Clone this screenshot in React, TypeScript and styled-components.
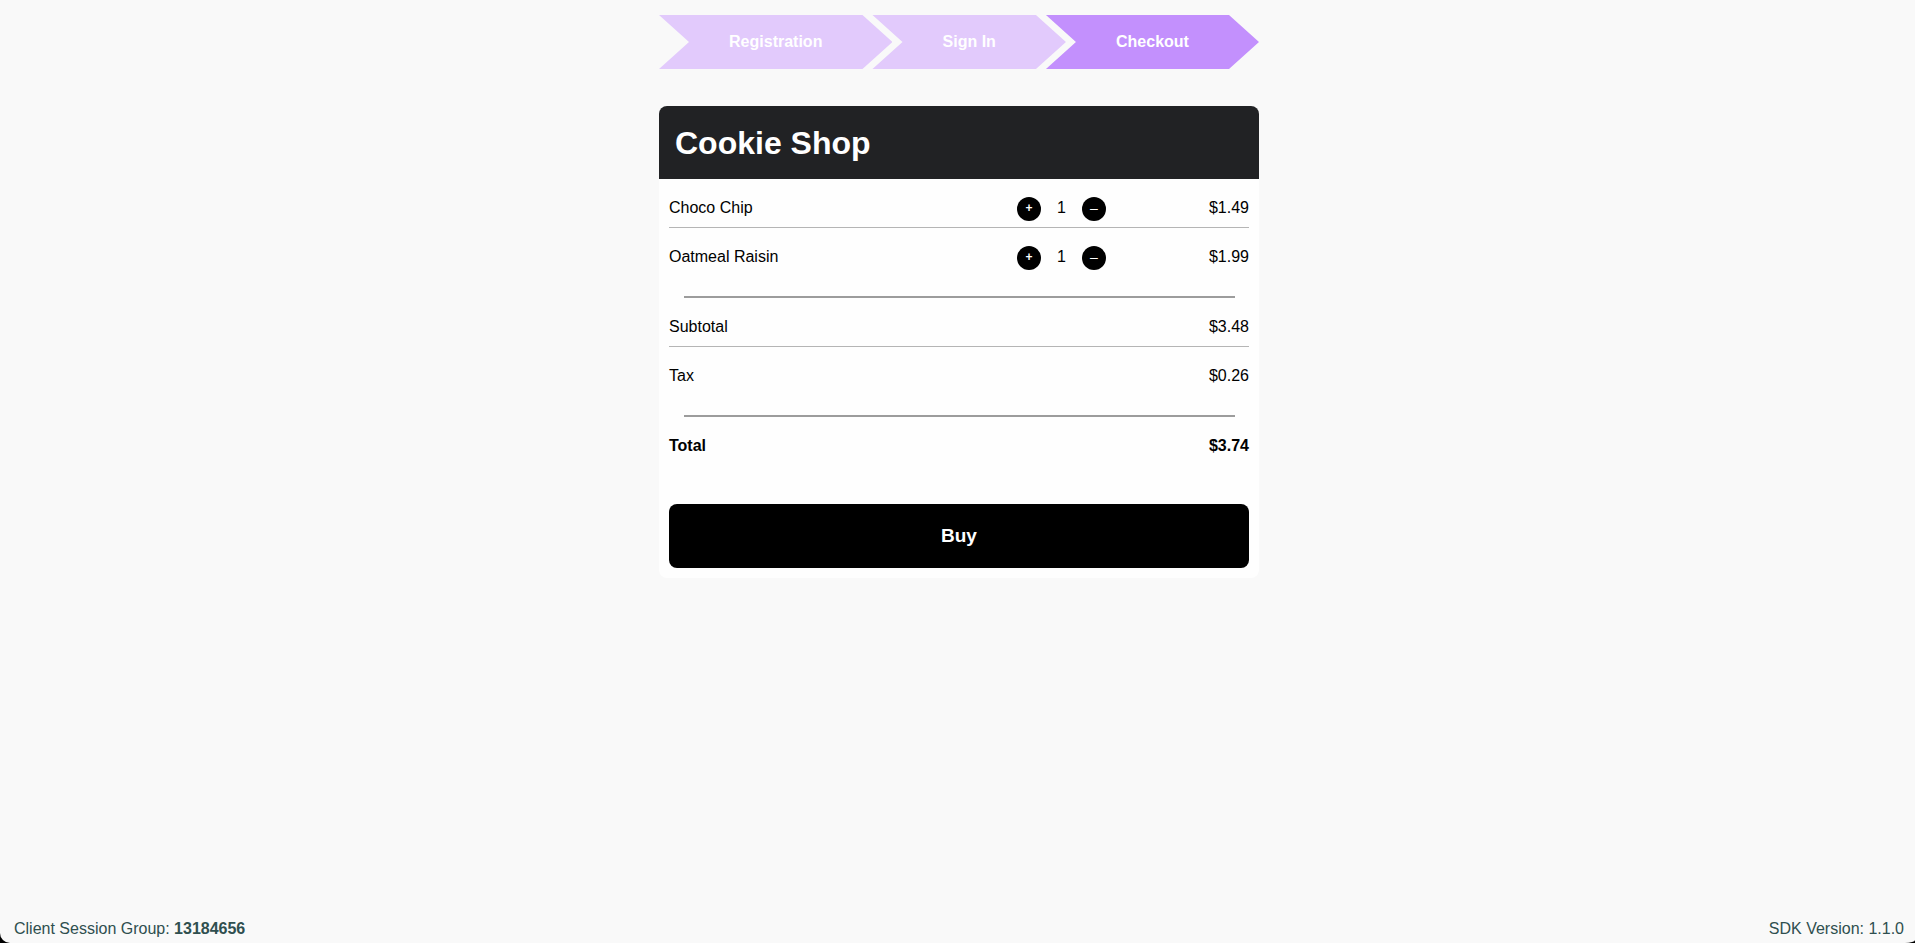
import React, { useState } from "react";
import styled, { createGlobalStyle } from "styled-components";

const GlobalStyle = createGlobalStyle`
  * {
    box-sizing: border-box;
  }
  html {
    background: #000;
  }
  body {
    margin: 0;
    font-family: "Liberation Sans", Arial, sans-serif;
    font-size: 16px;
    line-height: 18px;
    color: #000;
  }
`;

const Page = styled.div`
  display: flex;
  flex-direction: column;
  min-height: 100vh;
  padding: 15px 11px 5px 14px;
  background: #f9f9f9;
  border-radius: 0 0 10px 10px / 0 0 3px 10px;
`;

const Content = styled.main`
  flex: 1;
  width: 100%;
  max-width: 600px;
  margin: 0 auto;
`;

const Steps = styled.ol`
  display: flex;
  margin: 0 0 37px;
  padding: 0;
  list-style: none;
`;

const Step = styled.li<{ $active?: boolean }>`
  flex: 1 1 auto;
  padding: 18px 70px;
  background: ${({ $active }) => ($active ? "#c390fd" : "#e2cafc")};
  color: #fff;
  font-weight: bold;
  text-align: center;
  white-space: nowrap;
  clip-path: polygon(
    0 0,
    calc(100% - 30px) 0,
    100% 50%,
    calc(100% - 30px) 100%,
    0 100%,
    30px 50%
  );

  & + & {
    margin-left: -20px;
  }
`;

const Card = styled.section`
  overflow: hidden;
  border-radius: 8px;
  background: #fefefe;
`;

const CardHeader = styled.header`
  padding: 19px 16px 18px;
  background: #212224;
  color: #fff;
`;

const Title = styled.h1`
  margin: 0;
  font-size: 32px;
  line-height: 36px;
`;

const CardBody = styled.div`
  padding: 0 10px 10px;
`;

const Lines = styled.ul`
  margin: 0;
  padding: 0;
  list-style: none;
`;

const Line = styled.li<{ $strong?: boolean }>`
  display: grid;
  grid-template-columns: 3fr 1fr 1fr;
  align-items: start;
  min-height: 48px;
  padding: 18px 0 6px;
  line-height: 22px;
  font-weight: ${({ $strong }) => ($strong ? "bold" : "normal")};

  & + & {
    min-height: 49px;
    border-top: 1px solid #b5b5b5;
  }
`;

const Price = styled.span`
  grid-column: 3;
  text-align: right;
`;

const Quantity = styled.div`
  display: flex;
  gap: 16px;
`;

const RoundButton = styled.button<{ $thin?: boolean }>`
  flex: none;
  width: 24px;
  height: 24px;
  padding: 0 0 2px;
  border: 0;
  border-radius: 50%;
  background: #000;
  color: #fff;
  font-family: inherit;
  font-size: ${({ $thin }) => ($thin ? "14px" : "12px")};
  font-weight: ${({ $thin }) => ($thin ? "normal" : "bold")};
  line-height: 22px;
  text-align: center;
  cursor: pointer;
`;

const Divider = styled.hr`
  height: 2px;
  margin: 20px 14px 0 15px;
  border: 0;
  background: #9c9c9c;
`;

const BuyButton = styled.button`
  display: block;
  width: 100%;
  margin-top: 39px;
  padding: 20px;
  border: 0;
  border-radius: 8px;
  background: #000;
  color: #fff;
  font-family: inherit;
  font-size: 19px;
  font-weight: bold;
  line-height: 24px;
  cursor: pointer;
`;

const Footer = styled.footer`
  display: flex;
  justify-content: space-between;
  color: #2f4f4f;
`;

const money = (cents: number) => `$${(cents / 100).toFixed(2)}`;

const products = [
  { name: "Choco Chip", cents: 149 },
  { name: "Oatmeal Raisin", cents: 199 },
];

export default function App() {
  const [counts, setCounts] = useState([1, 1]);

  const change = (index: number, by: number) =>
    setCounts(counts.map((n, i) => (i === index ? Math.max(0, n + by) : n)));

  const subtotal = products.reduce((sum, p, i) => sum + p.cents * counts[i], 0);
  const tax = Math.round(subtotal * 0.075);

  return (
    <>
      <GlobalStyle />
      <Page>
        <Content>
          <Steps>
            <Step>Registration</Step>
            <Step>Sign In</Step>
            <Step $active aria-current="step">
              Checkout
            </Step>
          </Steps>
          <Card>
            <CardHeader>
              <Title>Cookie Shop</Title>
            </CardHeader>
            <CardBody>
              <Lines>
                {products.map((p, i) => (
                  <Line key={p.name}>
                    <span>{p.name}</span>
                    <Quantity>
                      <RoundButton type="button" aria-label={`Add ${p.name}`} onClick={() => change(i, 1)}>
                        +
                      </RoundButton>
                      <span>{counts[i]}</span>
                      <RoundButton $thin type="button" aria-label={`Remove ${p.name}`} onClick={() => change(i, -1)}>
                        –
                      </RoundButton>
                    </Quantity>
                    <Price>{money(p.cents)}</Price>
                  </Line>
                ))}
              </Lines>
              <Divider />
              <Lines>
                <Line>
                  <span>Subtotal</span>
                  <Price>{money(subtotal)}</Price>
                </Line>
                <Line>
                  <span>Tax</span>
                  <Price>{money(tax)}</Price>
                </Line>
              </Lines>
              <Divider />
              <Lines>
                <Line $strong>
                  <span>Total</span>
                  <Price>{money(subtotal + tax)}</Price>
                </Line>
              </Lines>
              <BuyButton type="button">Buy</BuyButton>
            </CardBody>
          </Card>
        </Content>
        <Footer>
          <span>
            Client Session Group: <strong>13184656</strong>
          </span>
          <span>SDK Version: 1.1.0</span>
        </Footer>
      </Page>
    </>
  );
}
